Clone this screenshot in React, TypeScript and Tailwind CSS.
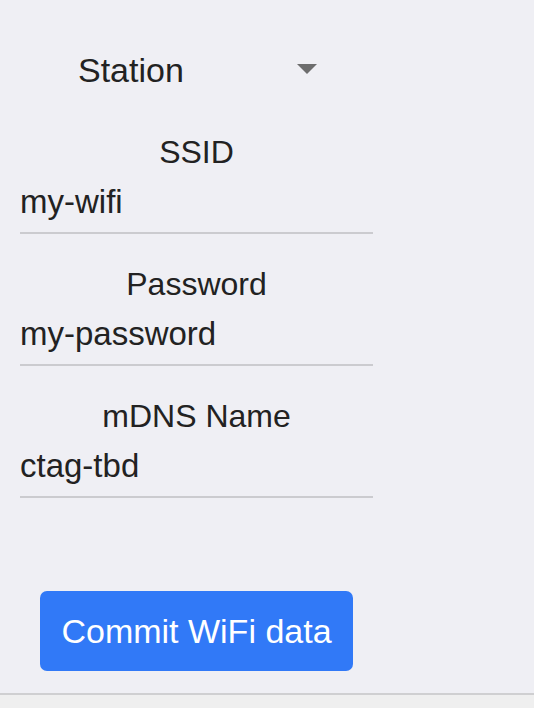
import { useState } from "react";

interface FieldProps {
    label: string,
    value: string,
    first?: boolean
};

function Field({ label, value, first }: FieldProps){
    return(
        <div className={"w-full flex flex-col " + (first ? "mt-[46px]" : "mt-[32px]")}>
            <label className="h-[36px] leading-[36px] text-center text-[32px] text-[#222]">{label}</label>
            <input
                readOnly
                defaultValue={value}
                className="mt-[14px] h-[36px] leading-[36px] pb-0 text-[33px] text-[#222] bg-transparent outline-none"
                style={{ fontFamily: "inherit" }}
            />
            <div className="mt-[12px] h-[2px] w-full bg-[#cbcbcf]" />
        </div>
    )
}

export default function App(){
    const [mode] = useState("Station");

    return(
        <div className="w-full min-h-[708px] flex flex-col bg-[#efeff4]" style={{ fontFamily: "'Liberation Sans', Arial, sans-serif" }}>
            <div className="w-[353px] ml-[20px] pt-[52px] flex flex-col">
                <div className="w-[300px] h-[36px] flex flex-row items-center justify-between">
                    <span className="ml-[58px] leading-[36px] text-[34px] text-[#222]">{mode}</span>
                    <svg width="20" height="11" viewBox="0 0 20 11" className="mr-[3px] mb-[2px]">
                        <polygon points="0,0 20,0 10,10" fill="#6d6d6d" />
                    </svg>
                </div>
                <Field label="SSID" value="my-wifi" first />
                <Field label="Password" value="my-password" />
                <Field label="mDNS Name" value="ctag-tbd" />
                <button className="mt-[93px] ml-[20px] w-[313px] h-[80px] rounded-[7px] bg-[#3179f7] text-white text-[34px] leading-[40px]">
                    Commit WiFi data
                </button>
            </div>
            <div className="mt-[22px] flex-1 border-t-2 border-[#cfcfd1] bg-[#efefef]" />
        </div>
    )
}
